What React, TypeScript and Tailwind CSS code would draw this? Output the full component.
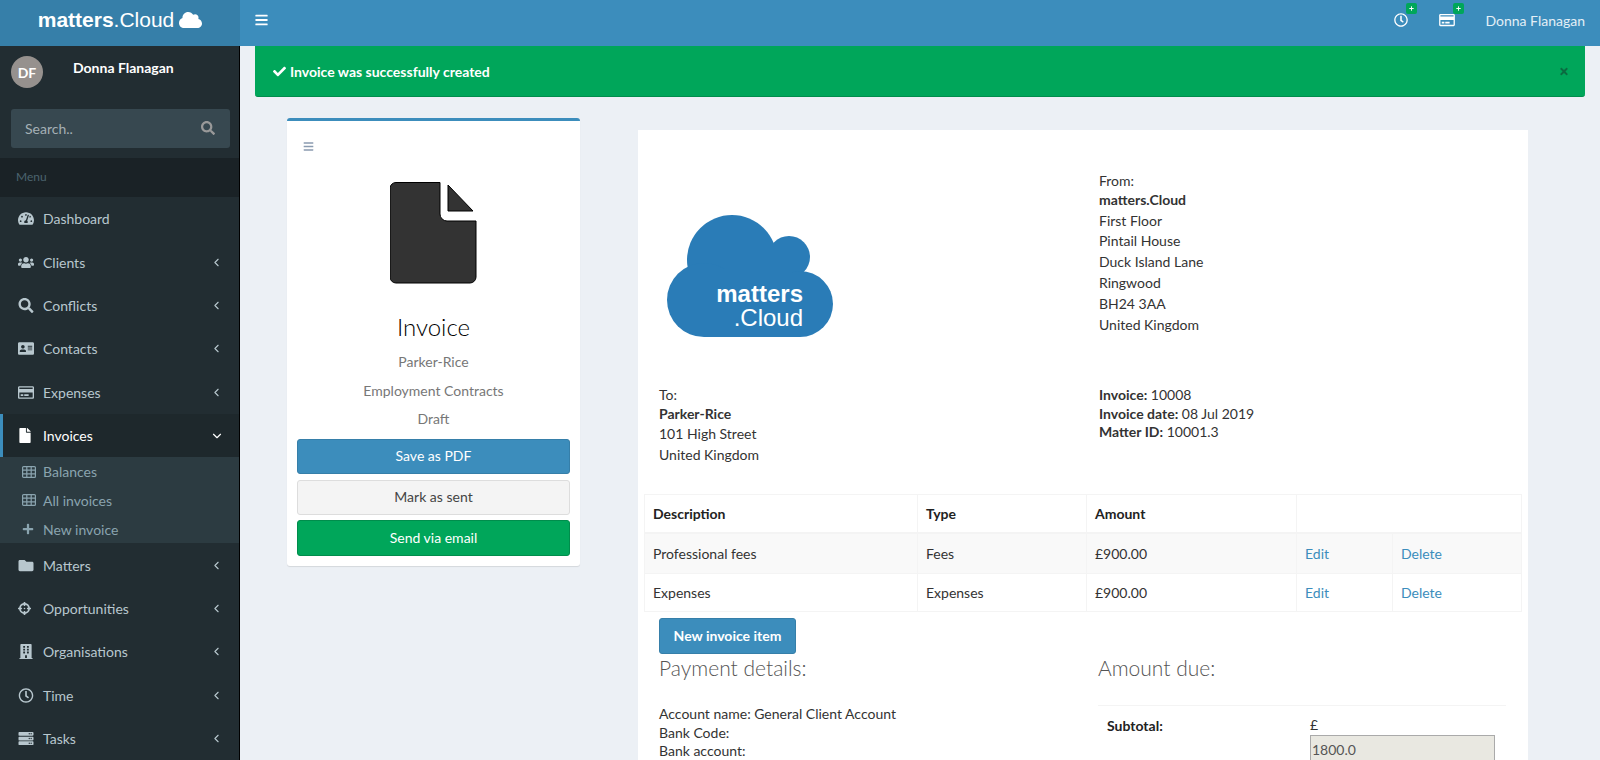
import {
  FaAddressCard,
  FaBars,
  FaBuilding,
  FaCheck,
  FaCloud,
  FaCrosshairs,
  FaFile,
  FaFolder,
  FaPlus,
  FaRegClock,
  FaRegCreditCard,
  FaSearch,
  FaServer,
  FaTachometerAlt,
  FaTimes,
  FaUsers,
} from "react-icons/fa";
import { ChevronDown, ChevronLeft } from "lucide-react";
import type { IconType } from "react-icons";

const topMenu: { label: string; icon: IconType; arrow?: boolean }[] = [
  { label: "Dashboard", icon: FaTachometerAlt },
  { label: "Clients", icon: FaUsers, arrow: true },
  { label: "Conflicts", icon: FaSearch, arrow: true },
  { label: "Contacts", icon: FaAddressCard, arrow: true },
  { label: "Expenses", icon: FaRegCreditCard, arrow: true },
];

const bottomMenu: { label: string; icon: IconType }[] = [
  { label: "Matters", icon: FaFolder },
  { label: "Opportunities", icon: FaCrosshairs },
  { label: "Organisations", icon: FaBuilding },
  { label: "Time", icon: FaRegClock },
  { label: "Tasks", icon: FaServer },
];

const items = [
  { description: "Professional fees", type: "Fees", amount: "£900.00" },
  { description: "Expenses", type: "Expenses", amount: "£900.00" },
];

function GridIcon() {
  return (
    <svg width="14" height="12" viewBox="0 0 14 12" fill="none" stroke="currentColor" strokeWidth="1.2">
      <rect x="0.6" y="0.6" width="12.8" height="10.8" rx="1" />
      <path d="M0.6 4.2H13.4M0.6 7.8H13.4M4.8 0.6V11.4M9.2 0.6V11.4" />
    </svg>
  );
}

function MenuRow({ label, icon: Icon, arrow }: { label: string; icon: IconType; arrow?: boolean }) {
  return (
    <div className="flex h-[43.4px] items-center pl-[18px] pr-[16px] text-[#b8c7ce]">
      <span className="flex w-[25px] shrink-0">
        <Icon className={label === "Opportunities" ? "h-[13px] w-[13px]" : "h-[15px] w-[16px]"} />
      </span>
      <span className="flex-1">{label}</span>
      {arrow && <ChevronLeft size={13} strokeWidth={2} />}
    </div>
  );
}

function TopBadge() {
  return (
    <span className="absolute -right-[9px] -top-[10px] flex h-[11px] w-[11px] items-center justify-center rounded-[2px] bg-[#00a65a]">
      <FaPlus className="h-[5px] w-[5px] text-white" />
    </span>
  );
}

function Sidebar() {
  return (
    <aside className="h-[714px] w-[240px] shrink-0 overflow-hidden border-r border-black bg-[#222d32] text-[14px]">
      <div className="flex h-[63px] pl-[11px] pt-[10px]">
        <div className="flex h-[32px] w-[32px] items-center justify-center rounded-full bg-[#96918e] text-[14px] font-bold text-white">
          DF
        </div>
        <div className="ml-[30px] mt-[3px] font-bold leading-[18px] text-white">Donna Flanagan</div>
      </div>
      <div className="ml-[11px] mr-[9px] flex h-[39px] items-center justify-between rounded-[3px] bg-[#374850] pb-[1px] pl-[14px] pr-[15px] text-[#a5b0b5]">
        <span>Search..</span>
        <FaSearch className="h-[14px] w-[14px] text-[#999]" />
      </div>
      <div className="mt-[10px] flex h-[39px] items-center bg-[#1a2226] pb-[1px] pl-[16px] text-[12px] text-[#4b646f]">
        Menu
      </div>
      {topMenu.map((m) => (
        <MenuRow key={m.label} {...m} />
      ))}
      <div className="flex h-[43.4px] items-center border-l-[3px] border-[#3c8dbc] bg-[#1e282c] pl-[15px] pr-[15px] text-white">
        <span className="flex w-[25px] shrink-0">
          <FaFile className="h-[15px] w-[14px]" />
        </span>
        <span className="flex-1">Invoices</span>
        <ChevronDown size={14} strokeWidth={2} />
      </div>
      <div className="bg-[#2c3b41] text-[#8aa4af]">
        <div className="flex h-[28.7px] items-center pl-[22px]">
          <span className="flex w-[21px] shrink-0">
            <GridIcon />
          </span>
          Balances
        </div>
        <div className="flex h-[28.7px] items-center pl-[22px]">
          <span className="flex w-[21px] shrink-0">
            <GridIcon />
          </span>
          All invoices
        </div>
        <div className="flex h-[28.7px] items-center pl-[22px]">
          <span className="flex w-[21px] shrink-0">
            <FaPlus className="h-[12px] w-[12px]" />
          </span>
          New invoice
        </div>
      </div>
      {bottomMenu.map((m) => (
        <MenuRow key={m.label} {...m} arrow />
      ))}
    </aside>
  );
}

function SummaryCard() {
  return (
    <div className="h-[448px] w-[293px] shrink-0 rounded-[3px] border-t-[3px] border-[#3c8dbc] bg-white px-[10px] text-center shadow-[0_1px_1px_rgba(0,0,0,0.1)]">
      <div className="flex pl-[6px] pt-[20px]">
        <FaBars className="h-[11px] w-[11px] text-[#8a9bb0]" />
      </div>
      <div className="mt-[30px] flex justify-center">
        <svg width="87" height="102" viewBox="0 0 87 102">
          <path
            d="M6 .5H50V32a7 7 0 0 0 7 7H86V95a6 6 0 0 1-6 6H6a6 6 0 0 1-6-6V6a6 6 0 0 1 6-5.5Z"
            fill="#333"
            stroke="#000"
          />
          <path d="M58 3 83 29H58Z" fill="#333" stroke="#000" />
        </svg>
      </div>
      <div className="mt-[27px] text-[24px] font-light leading-[32px] text-black">Invoice</div>
      <div className="mt-[9px] leading-[20px] text-[#777]">Parker-Rice</div>
      <div className="mt-[9px] leading-[20px] text-[#777]">Employment Contracts</div>
      <div className="mt-[8px] leading-[20px] text-[#777]">Draft</div>
      <div className="mt-[10px] flex h-[35px] items-center justify-center rounded-[3px] border border-[#367fa9] bg-[#3c8dbc] pb-[2px] text-white">
        Save as PDF
      </div>
      <div className="mt-[6px] flex h-[35px] items-center justify-center rounded-[3px] border border-[#ddd] bg-[#f4f4f4] pb-[2px] text-[#444]">
        Mark as sent
      </div>
      <div className="mt-[5px] flex h-[36px] items-center justify-center rounded-[3px] border border-[#008d4c] bg-[#00a65a] pb-[2px] text-white">
        Send via email
      </div>
    </div>
  );
}

function CloudLogo() {
  return (
    <svg width="166" height="123" viewBox="0 0 166 123" className="ml-[7px] mt-[44px]">
      <g fill="#2a7cb7">
        <circle cx="65" cy="45" r="45" />
        <circle cx="122" cy="42" r="21" />
        <circle cx="37" cy="85" r="37" />
        <circle cx="133" cy="89" r="33" />
        <rect x="37" y="60" width="96" height="62" />
        <rect x="65" y="30" width="60" height="40" />
      </g>
      <text x="136" y="87" textAnchor="end" fill="#fff" fontFamily="Liberation Sans" fontWeight="700" fontSize="24">
        matters
      </text>
      <text x="136" y="111" textAnchor="end" fill="#fff" fontFamily="Liberation Sans" fontSize="24">
        .Cloud
      </text>
    </svg>
  );
}

function InvoicePanel() {
  return (
    <div className="h-[640px] w-[890px] shrink-0 bg-white text-[#333]">
      <div className="flex h-[255px] pt-[41px]">
        <div className="w-[461px] pl-[22px]">
          <CloudLogo />
        </div>
        <div className="leading-[20.8px]">
          <div>From:</div>
          <div className="-mt-[2px] font-bold">matters.Cloud</div>
          <div>First Floor</div>
          <div>Pintail House</div>
          <div>Duck Island Lane</div>
          <div>Ringwood</div>
          <div>BH24 3AA</div>
          <div>United Kingdom</div>
        </div>
      </div>
      <div className="flex h-[109px]">
        <div className="w-[461px] pl-[21px] leading-[20.5px]">
          <div>To:</div>
          <div className="-mt-[2px] font-bold">Parker-Rice</div>
          <div>101 High Street</div>
          <div>United Kingdom</div>
        </div>
        <div className="pt-[1px] leading-[18.5px]">
          <div>
            <b>Invoice:</b> 10008
          </div>
          <div>
            <b>Invoice date:</b> 08 Jul 2019
          </div>
          <div>
            <b>Matter ID:</b> 10001.3
          </div>
        </div>
      </div>
      <table className="ml-[6px] w-[877px] table-fixed border-collapse">
        <colgroup>
          <col className="w-[273px]" />
          <col className="w-[169px]" />
          <col className="w-[210px]" />
          <col className="w-[96px]" />
          <col className="w-[129px]" />
        </colgroup>
        <thead>
          <tr className="h-[38px] border-b-2 border-[#f4f4f4] text-left">
            <th className="border border-[#f4f4f4] px-[8px] font-bold text-[#222]">Description</th>
            <th className="border border-[#f4f4f4] px-[8px] font-bold text-[#222]">Type</th>
            <th className="border border-[#f4f4f4] px-[8px] font-bold text-[#222]">Amount</th>
            <th colSpan={2} className="border border-[#f4f4f4]" />
          </tr>
        </thead>
        <tbody>
          {items.map((item, i) => (
            <tr key={item.description} className={i === 0 ? "h-[41px] bg-[#f9f9f9]" : "h-[38px]"}>
              <td className="border border-[#f4f4f4] px-[8px]">{item.description}</td>
              <td className="border border-[#f4f4f4] px-[8px]">{item.type}</td>
              <td className="border border-[#f4f4f4] px-[8px]">{item.amount}</td>
              <td className="border border-[#f4f4f4] px-[8px] text-[#3c8dbc]">Edit</td>
              <td className="border border-[#f4f4f4] px-[8px] text-[#3c8dbc]">Delete</td>
            </tr>
          ))}
        </tbody>
      </table>
      <div className="ml-[21px] mt-[6px] flex h-[36px] w-[137px] items-center justify-center rounded-[3px] border border-[#367fa9] bg-[#3c8dbc] pb-[2px] font-bold text-white">
        New invoice item
      </div>
      <div className="flex">
        <div className="w-[460px] pl-[21px]">
          <div className="text-[21px] font-light leading-[28px] text-[#555]">Payment details:</div>
          <div className="mt-[23px] leading-[18.5px]">
            <div>Account name: General Client Account</div>
            <div>Bank Code:</div>
            <div>Bank account:</div>
          </div>
        </div>
        <div className="w-[408px]">
          <div className="text-[21px] font-light leading-[28px] text-[#555]">Amount due:</div>
          <div className="mt-[23px] flex border-t border-[#f4f4f4] pt-[9px]">
            <div className="w-[212px] pl-[9px] font-bold text-[#222]">Subtotal:</div>
            <div>
              <div className="-mt-[1px] leading-[21px]">£</div>
              <div className="h-[32px] w-[185px] border border-[#aaa] bg-[#e9e8e1] pl-[1px] leading-[28px] text-[#555]">
                1800.0
              </div>
            </div>
          </div>
        </div>
      </div>
    </div>
  );
}

export default function App() {
  return (
    <div className="h-[760px] w-[1600px] overflow-hidden bg-[#ecf0f5] font-['Lato','Noto_Sans',sans-serif] text-[14px]">
      <header className="flex h-[46px] bg-[#3c8dbc] text-white">
        <div className="flex w-[240px] shrink-0 items-center justify-center gap-[5px] bg-[#367fa9] pb-[6px] font-['Liberation_Sans',sans-serif] text-[21px]">
          <span>
            <b>matters</b>.Cloud
          </span>
          <FaCloud className="h-[20px] w-[23px]" />
        </div>
        <div className="flex flex-1 items-center px-[15px] pb-[6px]">
          <FaBars className="h-[14px] w-[13px]" />
          <div className="ml-auto flex items-center">
            <span className="relative flex">
              <FaRegClock className="h-[14px] w-[14px]" />
              <TopBadge />
            </span>
            <span className="relative ml-[31px] flex">
              <FaRegCreditCard className="h-[14px] w-[16px]" />
              <TopBadge />
            </span>
            <span className="ml-[30px] text-[#e3eff6]">Donna Flanagan</span>
          </div>
        </div>
      </header>
      <div className="flex">
        <Sidebar />
        <main className="min-w-0 flex-1">
          <div className="mx-[15px] flex h-[51px] items-center rounded-b-[3px] border-b border-[#008d4c] bg-[#00a65a] pl-[18px] pr-[16px] font-bold text-white">
            <FaCheck className="mr-[4px] h-[13px] w-[13px]" />
            Invoice was successfully created
            <FaTimes className="ml-auto h-[11px] w-[10px] text-[#0b6b41]" />
          </div>
          <div className="mt-[21px] flex pl-[47px]">
            <SummaryCard />
            <div className="ml-[58px] mt-[12px]">
              <InvoicePanel />
            </div>
          </div>
        </main>
      </div>
    </div>
  );
}
